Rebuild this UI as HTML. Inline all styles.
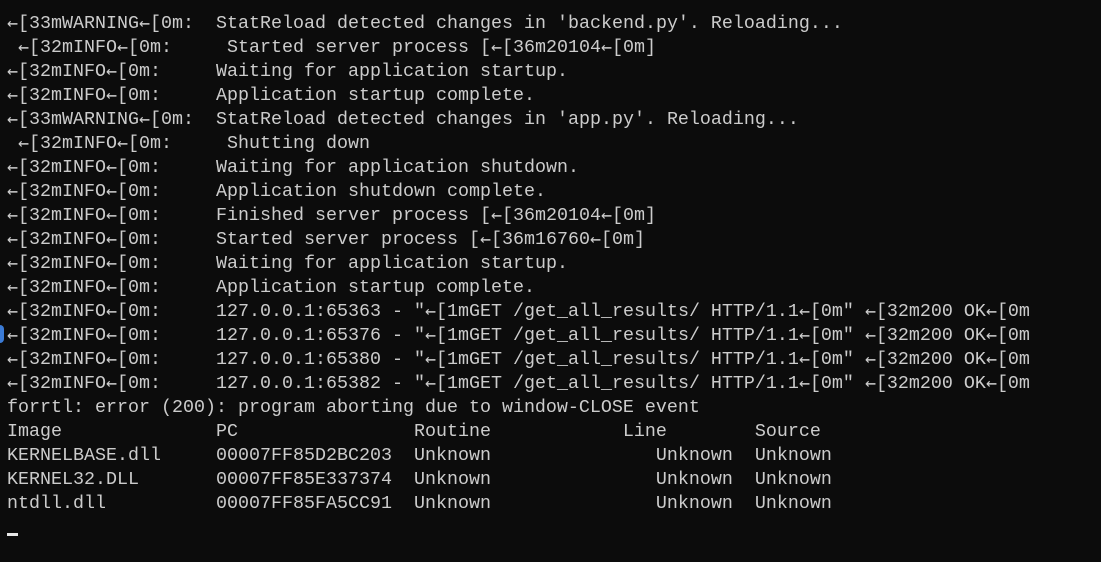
<!DOCTYPE html>
<html><head><meta charset="utf-8"><style>
html,body{margin:0;padding:0;background:#0c0c0c;width:1101px;height:562px;overflow:hidden}
pre{position:absolute;left:7px;top:12px;margin:0;font-family:"Liberation Mono","DejaVu Sans Mono",monospace;font-size:18.33px;line-height:24px;color:#cccccc;white-space:pre}
i{font-style:normal;font-family:"DejaVu Sans Mono",monospace;display:inline-block;width:11px;overflow:hidden;vertical-align:top}
.cur{position:absolute;left:7px;top:533px;width:11px;height:3px;background:#e8e8e8}
.blue{position:absolute;left:0;top:325px;width:4px;height:18px;background:#3b7bd6;border-radius:0 9px 9px 0}
</style></head><body>
<div class="blue"></div>
<pre><i>←</i>[33mWARNING<i>←</i>[0m:  StatReload detected changes in 'backend.py'. Reloading...
 <i>←</i>[32mINFO<i>←</i>[0m:     Started server process [<i>←</i>[36m20104<i>←</i>[0m]
<i>←</i>[32mINFO<i>←</i>[0m:     Waiting for application startup.
<i>←</i>[32mINFO<i>←</i>[0m:     Application startup complete.
<i>←</i>[33mWARNING<i>←</i>[0m:  StatReload detected changes in 'app.py'. Reloading...
 <i>←</i>[32mINFO<i>←</i>[0m:     Shutting down
<i>←</i>[32mINFO<i>←</i>[0m:     Waiting for application shutdown.
<i>←</i>[32mINFO<i>←</i>[0m:     Application shutdown complete.
<i>←</i>[32mINFO<i>←</i>[0m:     Finished server process [<i>←</i>[36m20104<i>←</i>[0m]
<i>←</i>[32mINFO<i>←</i>[0m:     Started server process [<i>←</i>[36m16760<i>←</i>[0m]
<i>←</i>[32mINFO<i>←</i>[0m:     Waiting for application startup.
<i>←</i>[32mINFO<i>←</i>[0m:     Application startup complete.
<i>←</i>[32mINFO<i>←</i>[0m:     127.0.0.1:65363 - "<i>←</i>[1mGET /get_all_results/ HTTP/1.1<i>←</i>[0m" <i>←</i>[32m200 OK<i>←</i>[0m
<i>←</i>[32mINFO<i>←</i>[0m:     127.0.0.1:65376 - "<i>←</i>[1mGET /get_all_results/ HTTP/1.1<i>←</i>[0m" <i>←</i>[32m200 OK<i>←</i>[0m
<i>←</i>[32mINFO<i>←</i>[0m:     127.0.0.1:65380 - "<i>←</i>[1mGET /get_all_results/ HTTP/1.1<i>←</i>[0m" <i>←</i>[32m200 OK<i>←</i>[0m
<i>←</i>[32mINFO<i>←</i>[0m:     127.0.0.1:65382 - "<i>←</i>[1mGET /get_all_results/ HTTP/1.1<i>←</i>[0m" <i>←</i>[32m200 OK<i>←</i>[0m
forrtl: error (200): program aborting due to window-CLOSE event
Image              PC                Routine            Line        Source
KERNELBASE.dll     00007FF85D2BC203  Unknown               Unknown  Unknown
KERNEL32.DLL       00007FF85E337374  Unknown               Unknown  Unknown
ntdll.dll          00007FF85FA5CC91  Unknown               Unknown  Unknown</pre>
<div class="cur"></div>
</body></html>
